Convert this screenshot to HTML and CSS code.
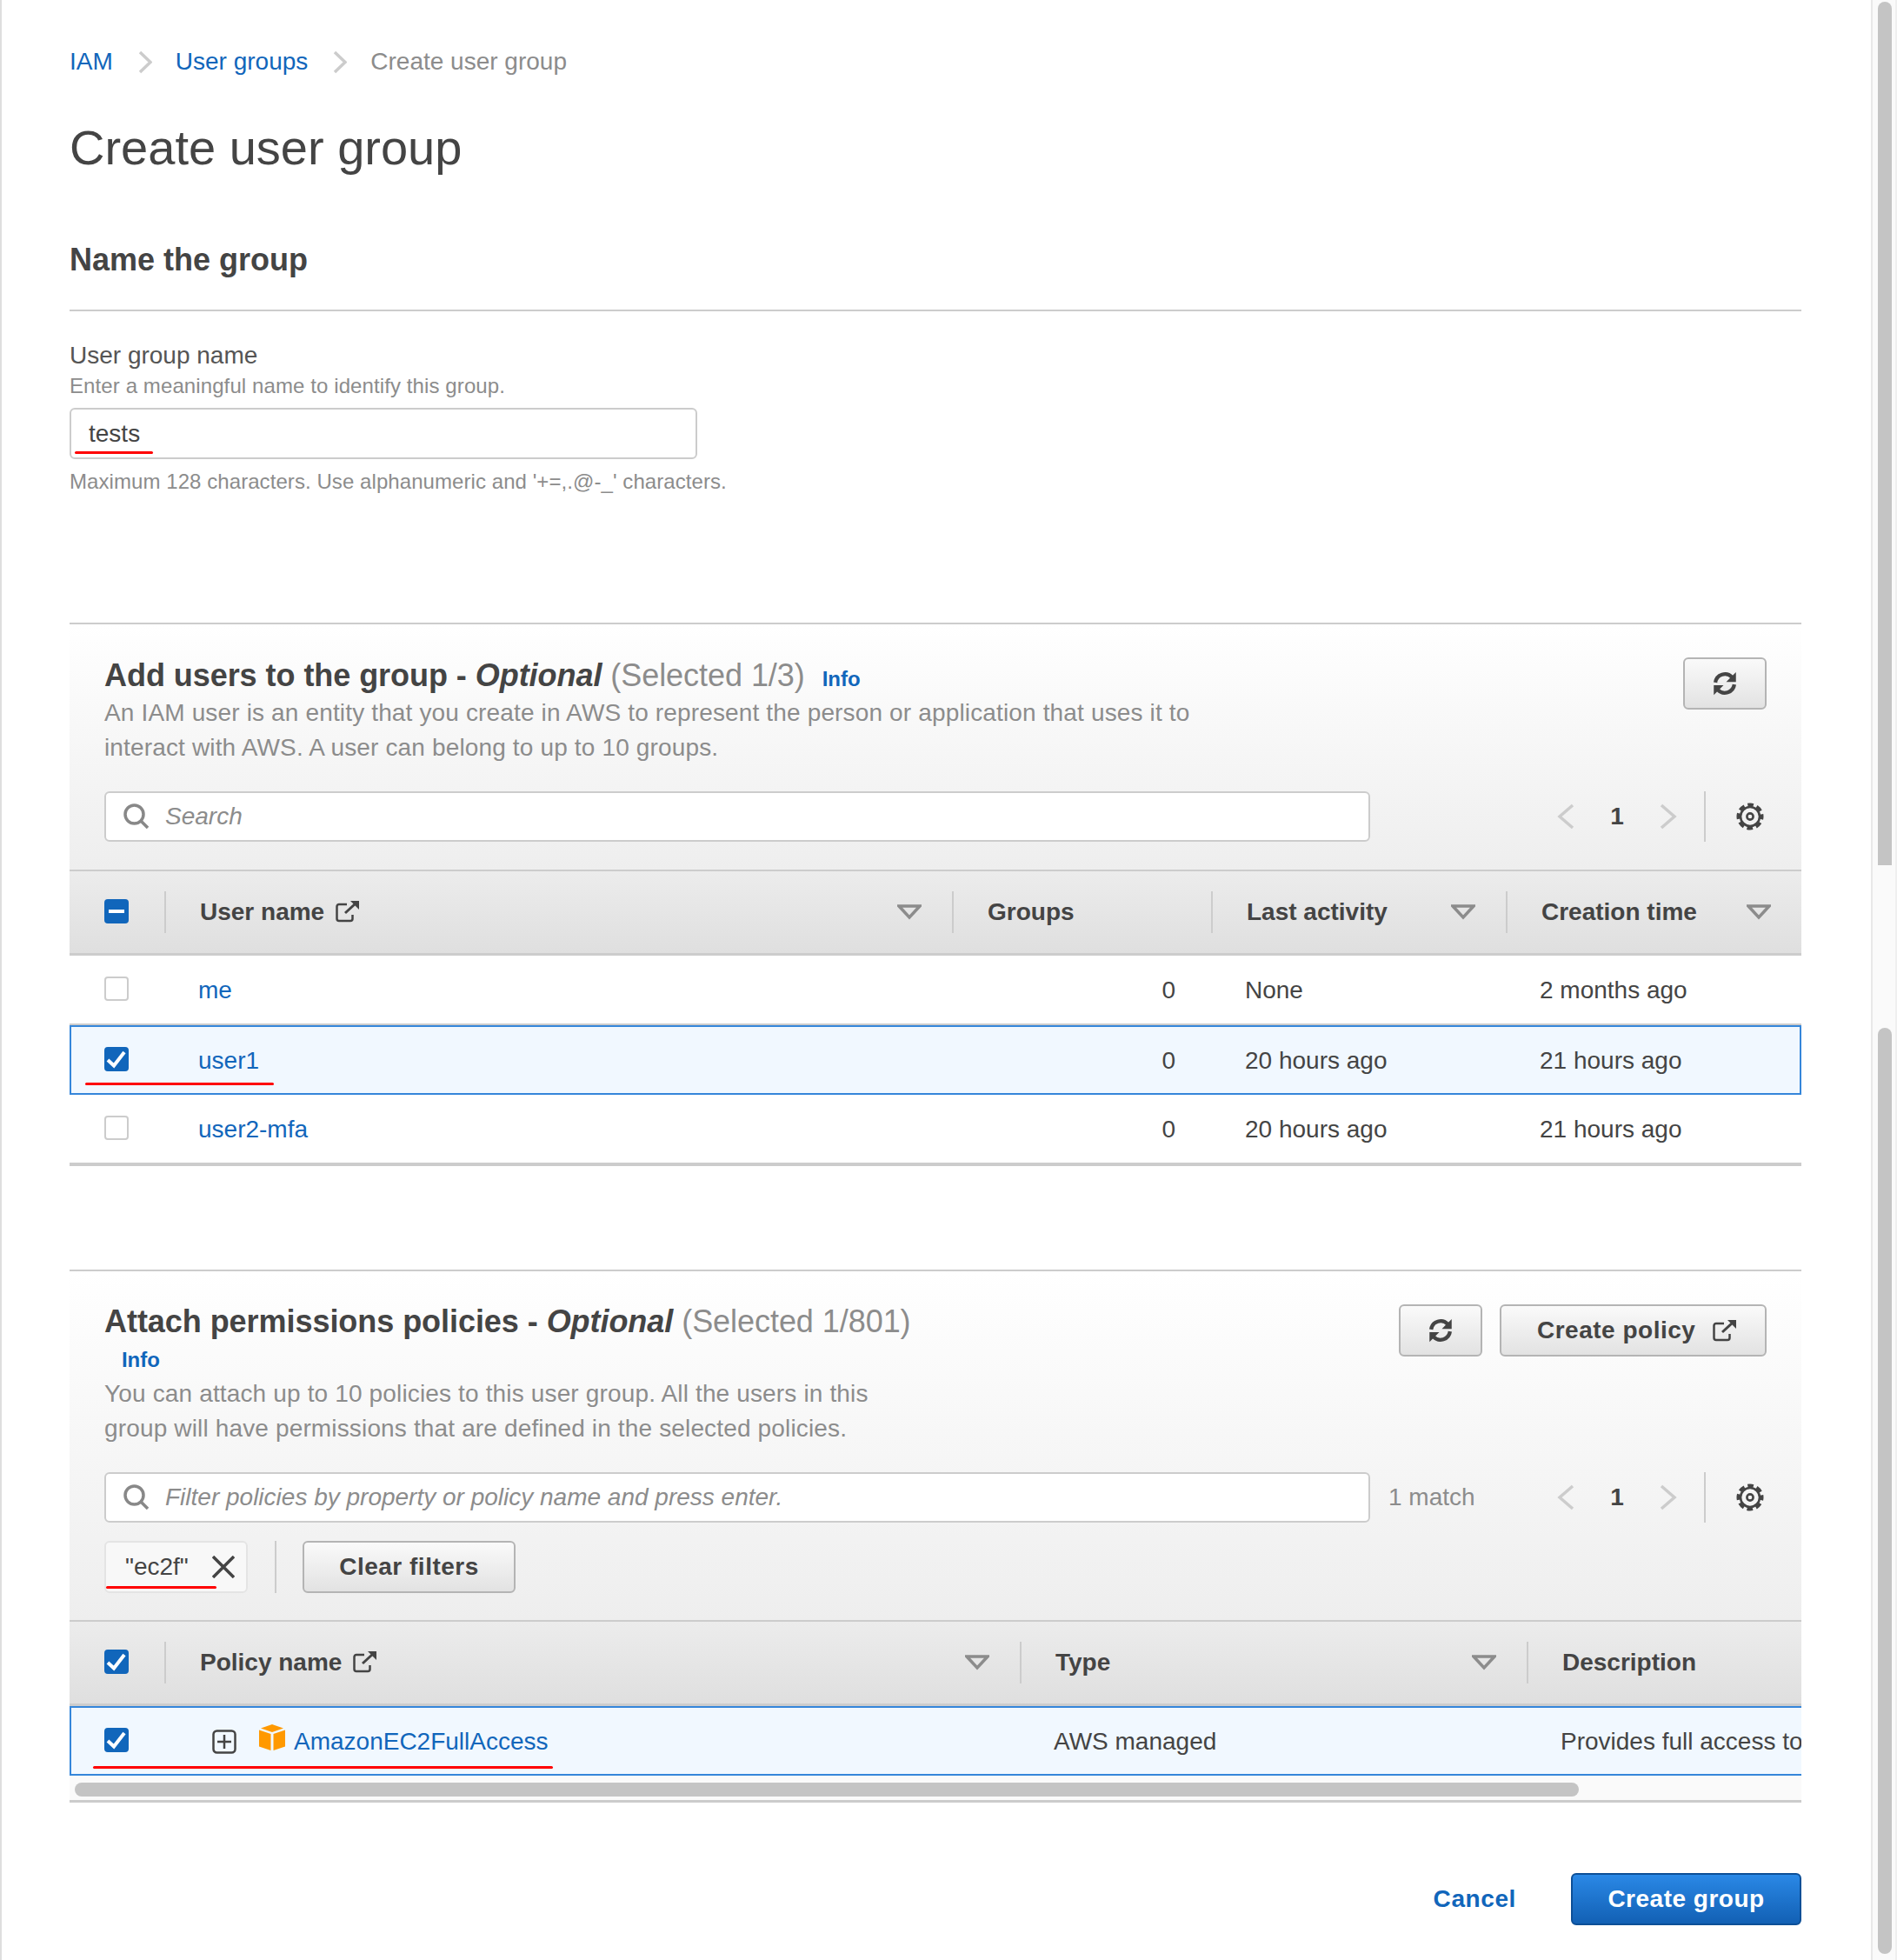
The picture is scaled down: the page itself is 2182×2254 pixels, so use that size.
FILE: index.html
```html
<!DOCTYPE html>
<html lang="en">
<head>
    <meta charset="UTF-8">
    <title>Create user group</title>
    <link rel="stylesheet" href="styles.css">
</head>
<body>
<div class="page">
    <main class="main">
        <nav class="crumbs">
            <a href="#">IAM</a>
            <svg class="crumb-sep" viewBox="0 0 16 27"><path d="M2 2l12 11.5L2 25"/></svg>
            <a href="#">User groups</a>
            <svg class="crumb-sep" viewBox="0 0 16 27"><path d="M2 2l12 11.5L2 25"/></svg>
            <span>Create user group</span>
        </nav>
        <h1>Create user group</h1>

        <h2 class="name-head">Name the group</h2>
        <div class="label">User group name</div>
        <div class="hint">Enter a meaningful name to identify this group.</div>
        <div class="name-input">
            <input type="text" value="tests">
            <span class="mark mark-tests"></span>
        </div>
        <div class="tip">Maximum 128 characters. Use alphanumeric and '+=,.@-_' characters.</div>

        <section class="panel panel-users">
            <div class="panel-head">
                <div class="head-row">
                    <div class="head-text head-text-users">
                        <h3><b>Add users to the group - <i>Optional</i></b> <span class="count">(Selected 1/3)</span><a class="info" href="#">Info</a></h3>
                        <p class="desc">An IAM user is an entity that you create in AWS to represent the person or application that uses it to interact with AWS. A user can belong to up to 10 groups.</p>
                    </div>
                    <button class="btn btn-icon">
                        <svg class="icon-refresh" viewBox="0 0 16 16"><path class="arc" d="M2.200 7.400A5.900 5.900 0 0 1 12.400 4.200"/><path d="M14.800 1v6H8.800z"/><path class="arc" d="M13.800 8.600A5.900 5.900 0 0 1 3.600 11.800"/><path d="M1.200 15V9h6z"/></svg>
                    </button>
                </div>
                <div class="tools-row">
                    <div class="search">
                        <svg class="icon-search" viewBox="0 0 30 30"><circle cx="12.500" cy="12.500" r="10.500"/><path d="M20 20l8 8"/></svg>
                        <input type="text" placeholder="Search">
                    </div>
                    <div class="pager">
                        <svg class="pager-arrow" viewBox="0 0 20 30"><path d="M18 2L3 15l15 13"/></svg>
                        <span class="pager-num">1</span>
                        <svg class="pager-arrow" viewBox="0 0 20 30"><path d="M2 2l15 13L2 28"/></svg>
                        <span class="pager-line"></span>
                        <svg class="icon-gear" viewBox="0 0 32 32"><circle class="teeth" cx="16" cy="16" r="13.600"/><circle cx="16" cy="16" r="11"/><circle cx="16" cy="16" r="3.600"/></svg>
                    </div>
                </div>
            </div>
            <table class="grid grid-users">
                <colgroup><col class="c-check"><col class="c-user"><col class="c-groups"><col class="c-last"><col class="c-created"></colgroup>
                <thead>
                    <tr>
                        <th class="th-check">
                            <span class="check check-on"><span class="dash"></span></span>
                        </th>
                        <th><div class="th-in"><span class="th-label">User name <svg class="icon-ext" viewBox="0 0 28 26"><path class="box" d="M13 5H4a2.500 2.500 0 0 0-2.500 2.500v14A2.500 2.500 0 0 0 4 24h13a2.500 2.500 0 0 0 2.500-2.500V17"/><path class="stem" d="M11 15L23 4"/><path d="M17 1h10v10z"/></svg></span><svg class="sort" viewBox="0 0 28 18"><path d="M2 2h24L14 15z"/></svg></div></th>
                        <th><div class="th-in"><span class="th-label">Groups</span></div></th>
                        <th><div class="th-in"><span class="th-label">Last activity</span><svg class="sort" viewBox="0 0 28 18"><path d="M2 2h24L14 15z"/></svg></div></th>
                        <th><div class="th-in"><span class="th-label">Creation time</span><svg class="sort" viewBox="0 0 28 18"><path d="M2 2h24L14 15z"/></svg></div></th>
                    </tr>
                </thead>
                <tbody>
                    <tr class="row">
                        <td class="td-check"><span class="check"></span></td>
                        <td><a href="#">me</a></td>
                        <td class="num">0</td>
                        <td>None</td>
                        <td>2 months ago</td>
                    </tr>
                    <tr class="row selected">
                        <td class="td-check">
                            <span class="check check-on"><svg viewBox="0 0 28 28"><path d="M4 15l7 6.500L23 6"/></svg></span>
                            <span class="mark mark-user"></span>
                        </td>
                        <td><a href="#">user1</a></td>
                        <td class="num">0</td>
                        <td>20 hours ago</td>
                        <td>21 hours ago</td>
                    </tr>
                    <tr class="row last">
                        <td class="td-check"><span class="check"></span></td>
                        <td><a href="#">user2-mfa</a></td>
                        <td class="num">0</td>
                        <td>20 hours ago</td>
                        <td>21 hours ago</td>
                    </tr>
                </tbody>
            </table>
        </section>

        <section class="panel panel-policies">
            <div class="panel-head">
                <div class="head-row">
                    <div class="head-text head-text-policies">
                        <h3><b>Attach permissions policies - <i>Optional</i></b> <span class="count">(Selected 1/801)</span><a class="info" href="#">Info</a></h3>
                        <p class="desc">You can attach up to 10 policies to this user group. All the users in this group will have permissions that are defined in the selected policies.</p>
                    </div>
                    <div class="head-btns">
                        <button class="btn btn-icon">
                            <svg class="icon-refresh" viewBox="0 0 16 16"><path class="arc" d="M2.200 7.400A5.900 5.900 0 0 1 12.400 4.200"/><path d="M14.800 1v6H8.800z"/><path class="arc" d="M13.800 8.600A5.900 5.900 0 0 1 3.600 11.800"/><path d="M1.200 15V9h6z"/></svg>
                        </button>
                        <button class="btn btn-create-policy">Create policy
                            <svg class="icon-ext" viewBox="0 0 28 26"><path class="box" d="M13 5H4a2.500 2.500 0 0 0-2.500 2.500v14A2.500 2.500 0 0 0 4 24h13a2.500 2.500 0 0 0 2.500-2.500V17"/><path class="stem" d="M11 15L23 4"/><path d="M17 1h10v10z"/></svg>
                        </button>
                    </div>
                </div>
                <div class="tools-row">
                    <div class="search">
                        <svg class="icon-search" viewBox="0 0 30 30"><circle cx="12.500" cy="12.500" r="10.500"/><path d="M20 20l8 8"/></svg>
                        <input type="text" placeholder="Filter policies by property or policy name and press enter.">
                    </div>
                    <span class="match">1 match</span>
                    <div class="pager">
                        <svg class="pager-arrow" viewBox="0 0 20 30"><path d="M18 2L3 15l15 13"/></svg>
                        <span class="pager-num">1</span>
                        <svg class="pager-arrow" viewBox="0 0 20 30"><path d="M2 2l15 13L2 28"/></svg>
                        <span class="pager-line"></span>
                        <svg class="icon-gear" viewBox="0 0 32 32"><circle class="teeth" cx="16" cy="16" r="13.600"/><circle cx="16" cy="16" r="11"/><circle cx="16" cy="16" r="3.600"/></svg>
                    </div>
                </div>
                <div class="filters-row">
                    <div class="chip">
                        <span>"ec2f"</span>
                        <svg class="icon-x" viewBox="0 0 26 26"><path d="M1 1l24 24M25 1L1 25"/></svg>
                        <span class="mark mark-chip"></span>
                    </div>
                    <span class="filters-line"></span>
                    <button class="btn btn-clear">Clear filters</button>
                </div>
            </div>
            <div class="grid-clip">
                <table class="grid grid-policies">
                    <colgroup><col class="c-check"><col class="c-policy"><col class="c-type"><col class="c-desc"></colgroup>
                    <thead>
                        <tr>
                            <th class="th-check">
                                <span class="check check-on"><svg viewBox="0 0 28 28"><path d="M4 15l7 6.500L23 6"/></svg></span>
                            </th>
                            <th><div class="th-in"><span class="th-label">Policy name <svg class="icon-ext" viewBox="0 0 28 26"><path class="box" d="M13 5H4a2.500 2.500 0 0 0-2.500 2.500v14A2.500 2.500 0 0 0 4 24h13a2.500 2.500 0 0 0 2.500-2.500V17"/><path class="stem" d="M11 15L23 4"/><path d="M17 1h10v10z"/></svg></span><svg class="sort" viewBox="0 0 28 18"><path d="M2 2h24L14 15z"/></svg></div></th>
                            <th><div class="th-in"><span class="th-label">Type</span><svg class="sort" viewBox="0 0 28 18"><path d="M2 2h24L14 15z"/></svg></div></th>
                            <th><div class="th-in"><span class="th-label">Description</span></div></th>
                        </tr>
                    </thead>
                    <tbody>
                        <tr class="row selected">
                            <td class="td-check">
                                <span class="check check-on"><svg viewBox="0 0 28 28"><path d="M4 15l7 6.500L23 6"/></svg></span>
                                <span class="mark mark-policy"></span>
                            </td>
                            <td>
                                <div class="policy-cell">
                                    <svg class="icon-plus" viewBox="0 0 28 28"><rect x="1.500" y="1.500" width="25" height="25" rx="4"/><path d="M14 6v16M6 14h16"/></svg>
                                    <svg class="icon-cube" viewBox="0 0 30 30"><path d="M15 0l13 4.500L15 9 2 4.500z"/><path d="M0 6.500l13.500 4.500v19L0 25.500z"/><path d="M30 6.500L16.500 11v19L30 25.500z"/></svg>
                                    <a href="#">AmazonEC2FullAccess</a>
                                </div>
                            </td>
                            <td>AWS managed</td>
                            <td>Provides full access to Amazon EC2 via the AWS Management Console.</td>
                        </tr>
                    </tbody>
                </table>
            </div>
            <div class="hscroll"><div class="hscroll-thumb"></div></div>
        </section>

        <div class="actions">
            <a class="cancel" href="#">Cancel</a>
            <button class="btn-primary">Create group</button>
        </div>
    </main>
    <div class="vscroll">
        <div class="vthumb vthumb-first"></div>
        <div class="vthumb vthumb-second"></div>
    </div>
</div>
</body>
</html>
```

FILE: styles.css
```css
* {
    box-sizing: border-box;
}
html, body {
    margin: 0;
    height: 2254px;
    overflow: hidden;
}
body {
    font-family: "Liberation Sans", Arial, sans-serif;
    font-size: 28px;
    color: #444;
    background-color: #fff;
}
a {
    color: #1166bb;
    text-decoration: none;
}
button, input {
    font-family: inherit;
}
.page {
    display: flex;
    height: 2254px;
    border-left: 2px solid #dedede;
}
.main {
    flex: 1;
    min-width: 0;
    padding: 51px 80px 0 78px;
}

/* breadcrumb + headings */
.crumbs {
    display: flex;
    align-items: center;
    height: 40px;
    color: #8c8c8c;
}
.crumb-sep {
    width: 16px;
    height: 27px;
    margin: 0 27px 0 29px;
    fill: none;
    stroke: #ccc;
    stroke-width: 3.500;
}
h1 {
    margin: 44px 0 0;
    font-size: 56px;
    font-weight: normal;
    line-height: 70px;
}
.name-head {
    margin: 72px 0 0;
    padding-bottom: 35px;
    border-bottom: 2px solid #ccc;
    font-size: 36px;
    line-height: 44px;
}
.label {
    margin-top: 33px;
    line-height: 36px;
    color: #555;
}
.hint {
    margin-top: 2px;
    font-size: 24px;
    line-height: 30px;
    letter-spacing: .1px;
    color: #8c8c8c;
}
.name-input {
    position: relative;
    width: 722px;
    height: 59px;
    margin-top: 10px;
}
.name-input input {
    width: 100%;
    height: 100%;
    padding: 0 20px;
    border: 2px solid #ccc;
    border-radius: 6px;
    font-size: 28px;
    color: #444;
    background-color: #fff;
}
.tip {
    margin-top: 11px;
    font-size: 24px;
    line-height: 30px;
    letter-spacing: .07px;
    color: #8c8c8c;
}

/* red annotations over the page */
.mark {
    position: absolute;
    height: 3px;
    border-radius: 2px;
    background-color: #f00;
}
.mark-tests {
    left: 6px;
    top: 50px;
    width: 90px;
}
.mark-user {
    left: 16px;
    top: 64px;
    width: 217px;
}
.mark-chip {
    left: 0;
    top: 50px;
    width: 127px;
}
.mark-policy {
    left: 25px;
    top: 67px;
    width: 529px;
}

/* panels */
.panel {
    border-top: 2px solid #ccc;
}
.panel-users {
    margin-top: 147px;
}
.panel-policies {
    margin-top: 119px;
}
.panel-head {
    padding: 36px 40px 31px;
    background: linear-gradient(#fff, #eee);
}
.panel-users .panel-head {
    padding-bottom: 32px;
}
.head-row {
    display: flex;
    justify-content: space-between;
    align-items: flex-start;
}
.head-text-users {
    width: 1260px;
    padding-top: 1px;
}
.head-text-policies {
    width: 935px;
}
h3 {
    margin: 0;
    font-size: 36px;
    font-weight: normal;
    line-height: 44px;
    letter-spacing: -.05px;
}
.count {
    color: #8c8c8c;
}
.info {
    display: inline-block;
    margin-left: 20px;
    font-size: 24px;
    font-weight: bold;
    line-height: 24px;
}
.head-text-policies .info {
    vertical-align: 4px;
}
.desc {
    margin: 1px 0 0;
    line-height: 40px;
    letter-spacing: .15px;
    color: #8c8c8c;
}
.head-text-policies .desc {
    margin-top: -3px;
}
.head-btns {
    display: flex;
    gap: 20px;
}
.btn {
    height: 60px;
    margin-top: 2px;
    border: 2px solid #b4b4b4;
    border-radius: 6px;
    font-size: 28px;
    font-weight: bold;
    letter-spacing: .5px;
    color: #444;
    background: linear-gradient(#fafafa, #e2e2e2);
}
.btn-icon {
    display: flex;
    align-items: center;
    justify-content: center;
    width: 96px;
    padding: 0;
}
.btn-create-policy {
    display: flex;
    align-items: center;
    gap: 20px;
    width: 307px;
    padding: 0 0 0 41px;
}
.icon-refresh {
    width: 30px;
    height: 30px;
    fill: #444;
}
.icon-refresh .arc {
    fill: none;
    stroke: #444;
    stroke-width: 2.300;
}
.icon-ext {
    width: 28px;
    height: 26px;
    fill: #444;
    vertical-align: -3px;
}
.th-label .icon-ext {
    margin-left: 5px;
}
.icon-ext .box,
.icon-ext .stem {
    fill: none;
    stroke: #444;
    stroke-width: 2.500;
}
.icon-ext .stem {
    stroke-width: 3;
}
.tools-row {
    display: flex;
    align-items: center;
    margin-top: 30px;
}
.search {
    display: flex;
    align-items: center;
    gap: 18px;
    width: 1456px;
    height: 58px;
    padding-left: 20px;
    border: 2px solid #ccc;
    border-radius: 6px;
    background-color: #fff;
}
.search input {
    flex: 1;
    border: none;
    outline: none;
    padding: 0;
    font-size: 28px;
    font-style: italic;
    background: none;
}
.search input::placeholder {
    color: #8c8c8c;
    opacity: 1;
}
.icon-search {
    width: 30px;
    height: 30px;
    fill: none;
    stroke: #888;
    stroke-width: 3.500;
}
.match {
    margin-left: 21px;
    color: #8c8c8c;
}
.pager {
    display: flex;
    align-items: center;
    margin-left: auto;
    margin-right: 3px;
}
.pager-arrow {
    width: 20px;
    height: 30px;
    fill: none;
    stroke: #ccc;
    stroke-width: 3.500;
}
.pager-num {
    width: 98px;
    font-weight: bold;
    text-align: center;
}
.pager-line {
    width: 2px;
    height: 58px;
    margin: 0 35px 0 31px;
    background-color: #ccc;
}
.icon-gear {
    width: 32px;
    height: 32px;
    fill: none;
    stroke: #444;
    stroke-width: 2.600;
}
.icon-gear .teeth {
    stroke-width: 3.800;
    stroke-dasharray: 6.700 4;
    stroke-dashoffset: 3.300;
}
.filters-row {
    display: flex;
    align-items: center;
    margin-top: 21px;
}
.chip {
    position: relative;
    display: flex;
    align-items: center;
    justify-content: space-between;
    width: 165px;
    height: 60px;
    padding: 0 13px 0 22px;
    border: 2px solid #e4e4e4;
    border-radius: 6px;
    background-color: #f8f8f8;
}
.icon-x {
    width: 26px;
    height: 26px;
    fill: none;
    stroke: #444;
    stroke-width: 3.500;
}
.filters-line {
    width: 2px;
    height: 60px;
    margin: 0 30px 0 31px;
    background-color: #ccc;
}
.btn-clear {
    width: 245px;
    margin-top: 0;
}

/* tables */
.grid {
    border-collapse: separate;
    border-spacing: 0;
    table-layout: fixed;
}
.grid-users {
    width: 1992px;
}
.grid-policies {
    width: 2800px;
}
.grid-clip {
    overflow: hidden;
}
.c-check { width: 109px; }
.c-user { width: 906px; }
.c-groups { width: 298px; }
.c-last { width: 339px; }
.c-created { width: 340px; }
.c-policy { width: 984px; }
.c-type { width: 583px; }
.grid th {
    height: 99px;
    padding: 0;
    border-top: 2px solid #ccc;
    border-bottom: 3px solid #ccc;
    text-align: left;
    font-weight: bold;
    background: linear-gradient(#ececec, #dfdfdf);
}
.grid .th-check {
    padding-left: 40px;
}
.th-in {
    display: flex;
    align-items: center;
    justify-content: space-between;
    height: 48px;
    padding: 0 35px 0 39px;
    border-left: 2px solid #ccc;
}
.sort {
    width: 28px;
    height: 18px;
    fill: none;
    stroke: #8c8c8c;
    stroke-width: 3.500;
}
.check {
    display: block;
    width: 28px;
    height: 28px;
    margin-bottom: 3px;
    border: 2px solid #ccc;
    border-radius: 4px;
    background-color: #fff;
}
.check-on {
    display: flex;
    align-items: center;
    justify-content: center;
    border-color: #1166bb;
    background-color: #1166bb;
}
.check svg {
    flex: none;
    width: 28px;
    height: 28px;
    fill: none;
    stroke: #fff;
    stroke-width: 4;
}
.dash {
    width: 18px;
    height: 4px;
    background-color: #fff;
}
.grid td {
    height: 80px;
    padding: 2px 0 0 39px;
    border-bottom: 2px solid #ccc;
    white-space: nowrap;
    background-color: #fff;
}
.grid .td-check {
    position: relative;
    padding-top: 0;
    padding-left: 40px;
}
.grid .num {
    padding: 2px 41px 0 0;
    text-align: right;
}
.grid .last td {
    height: 82px;
    border-bottom: 4px solid #ccc;
}
.grid .selected td {
    border-top: 2px solid #3586da;
    border-bottom: 2px solid #3586da;
    background-color: #f1f8ff;
}
.grid .selected td:first-child {
    padding-left: 38px;
    border-left: 2px solid #3586da;
}
.grid .selected td:last-child {
    border-right: 2px solid #3586da;
}
.policy-cell {
    display: flex;
    align-items: center;
    margin-left: 16px;
}
.icon-plus {
    width: 28px;
    height: 28px;
    fill: none;
    stroke: #444;
    stroke-width: 2.500;
}
.icon-cube {
    width: 30px;
    height: 30px;
    margin: 0 10px 10px 26px;
    fill: #ff9900;
}
.hscroll {
    height: 31px;
    padding: 8px 6px 0;
    border-bottom: 3px solid #ccc;
    background-color: #fafafa;
}
.hscroll-thumb {
    width: 1730px;
    height: 16px;
    border-radius: 8px;
    background-color: #c4c4c4;
}

/* footer */
.actions {
    display: flex;
    align-items: center;
    justify-content: flex-end;
    gap: 63px;
    margin-top: 81px;
}
.cancel {
    font-weight: bold;
    letter-spacing: .6px;
}
.btn-primary {
    width: 265px;
    height: 60px;
    border: 2px solid #0d4f97;
    border-radius: 6px;
    font-size: 28px;
    font-weight: bold;
    letter-spacing: .5px;
    color: #fff;
    background: linear-gradient(#2a88e6, #1260b4);
}

/* window scrollbar */
.vscroll {
    display: flex;
    flex-direction: column;
    flex: none;
    gap: 187px;
    width: 30px;
    padding: 2px 0 0 6px;
    border-left: 2px solid #e8e8e8;
    border-right: 2px solid #efefef;
    background-color: #fafafa;
}
.vthumb {
    width: 16px;
    background-color: #c4c4c4;
}
.vthumb-first {
    height: 993px;
    border-radius: 8px 8px 0 0;
}
.vthumb-second {
    height: 1065px;
    border-radius: 8px;
}
```
